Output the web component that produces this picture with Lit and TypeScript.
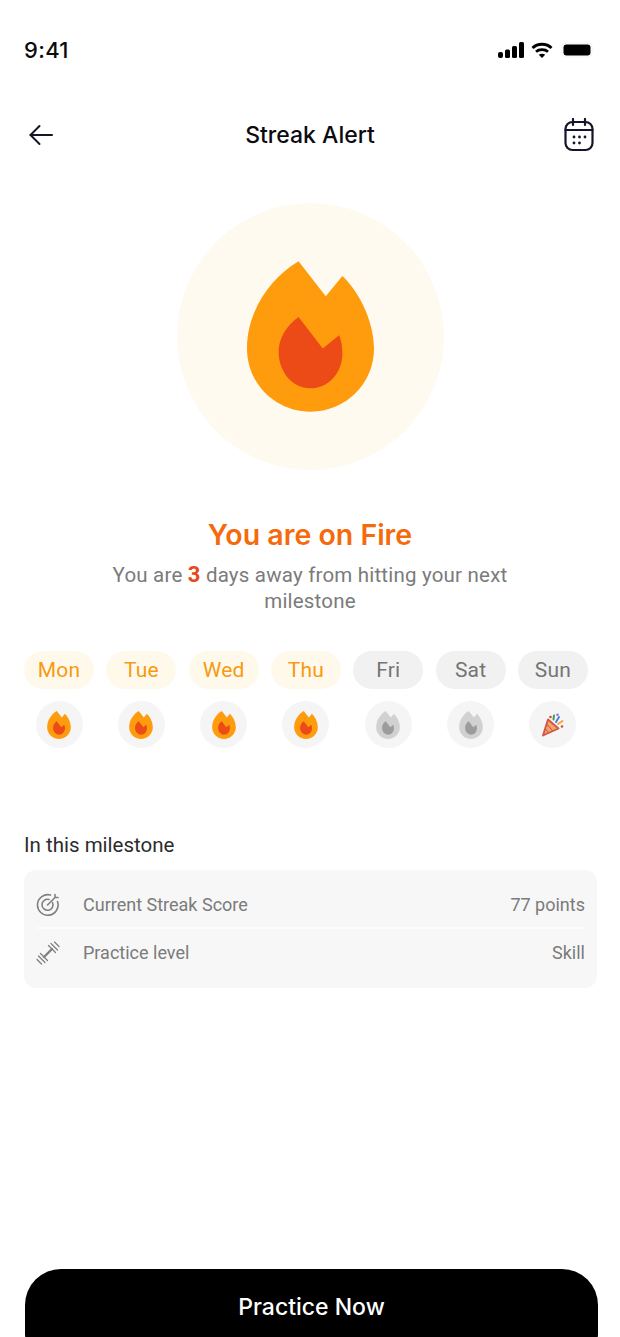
import { LitElement, html, css } from "lit";
import { customElement } from "lit/decorators.js";

const flame = (a: string, b: string) => html`<svg class="flame" viewBox="0 0 382 452" aria-hidden="true">
  <path fill=${a} d="M155 0L237 105L287 44C345 100 382 190 382 262C382 368 297 452 191 452C85 452 0 368 0 262C0 150 70 50 155 0Z"/>
  <path fill=${b} d="M155 167L228 262L277 222C284 238 287 258 287 277C287 335 245 382 190 382C135 382 95 330 95 272C95 230 120 192 155 167Z"/>
</svg>`;

const popper = html`<svg class="popper" viewBox="0 0 24 24" aria-hidden="true">
  <path d="M7 6.500L17.500 15.500L2 22.500Z" fill="#f0a868" stroke="#d2564a" stroke-width="1.900" stroke-linejoin="round"/>
  <path d="M6 11.500L11.500 17.500M4.500 16L7.500 19.500" stroke="#d2564a" stroke-width="1.100" fill="none"/>
  <path d="M12.500 6.500L13 2.500" stroke="#3f9d4a" stroke-width="2" stroke-linecap="round"/>
  <path d="M15 9L18 4" stroke="#4a7fe0" stroke-width="2" stroke-linecap="round"/>
  <path d="M17 11L21.500 8" stroke="#f0a92c" stroke-width="2" stroke-linecap="round"/>
  <circle cx="9.500" cy="4" r="1.300" fill="#e0483c"/>
  <circle cx="16.500" cy="1.800" r="1.200" fill="#a35fd0"/>
  <circle cx="21" cy="13.500" r="1.300" fill="#e0483c"/>
</svg>`;

const days = [
  { d: "Mon", on: true }, { d: "Tue", on: true }, { d: "Wed", on: true }, { d: "Thu", on: true },
  { d: "Fri", on: false }, { d: "Sat", on: false }, { d: "Sun", on: false, party: true },
];

@customElement("app-root")
export class AppRoot extends LitElement {
  static styles = css`
    :host { display: block; width: 620px; height: 1337px; overflow: hidden; background: #fff; font-family: "Inter", "Liberation Sans", sans-serif; color: #0b0b0f; }
    .status { display: flex; justify-content: space-between; align-items: center; height: 24px; padding: 38px 27px 0 24px; }
    .time { font-size: 22px; font-weight: 500; letter-spacing: .3px; }
    .status-icons { display: flex; align-items: center; }
    .wifi { margin: 0 8px 0 7px; }
    .header { display: flex; justify-content: space-between; align-items: center; height: 40px; padding: 0 24px; margin-top: 53px; }
    .header h1 { margin: 0; font-size: 23px; font-weight: 500; }
    .back { margin: 0 3px 0 5px; }
    .cal { margin-right: 2px; }
    .hero { width: 267px; height: 267px; border-radius: 50%; background: #fffaf0; margin: 48px auto 0; display: flex; align-items: center; justify-content: center; }
    .hero .flame { width: 127px; height: 151px; }
    h2 { margin: 47px 0 0; text-align: center; font-size: 28.500px; line-height: 36px; font-weight: 600; color: #f46a0c; }
    .sub { margin: 9px auto 0; width: 440px; text-align: center; font-family: "Roboto", sans-serif; font-size: 20.500px; letter-spacing: .2px; line-height: 26px; color: #7b7b7b; }
    .sub b { color: #e8481a; font-size: 22px; font-weight: 700; }
    .week { display: flex; justify-content: space-between; width: 564px; margin: 37px 0 0 24px; }
    .day { display: flex; flex-direction: column; align-items: center; gap: 12px; width: 70px; }
    .pill { width: 70px; height: 38px; border-radius: 19px; display: flex; align-items: center; justify-content: center; font-family: "Roboto", sans-serif; font-size: 21px; letter-spacing: .2px; background: #f1f1f1; color: #757575; }
    .pill.on { background: #fff9ec; color: #f8990f; }
    .dot { width: 47px; height: 47px; border-radius: 50%; background: #f5f5f5; display: flex; align-items: center; justify-content: center; }
    .dot .flame { width: 24px; height: 28px; }
    .popper { width: 24px; height: 24px; }
    .section { margin: 84px 23px 0 24px; }
    .section h3 { margin: 0; font-family: "Roboto", sans-serif; font-size: 20.500px; line-height: 26px; font-weight: 400; color: #2c2c2c; }
    .card { margin-top: 12px; background: #f7f7f7; border-radius: 12px; padding: 11px 12px 11px; height: 118px; box-sizing: border-box; }
    .row { display: flex; align-items: center; height: 46px; font-family: "Roboto", sans-serif; font-size: 18px; color: #7b7b7b; }
    .row + .row { border-top: 2px solid #fbfbfb; height: 47px; }
    .row svg { width: 24px; height: 24px; margin-right: 23px; flex: none; }
    .row span:last-child { margin-left: auto; }
    .cta { display: flex; align-items: flex-start; justify-content: center; box-sizing: border-box; width: 573px; height: 100px; margin: 281px 0 0 25px; padding-top: 21px; border: 0; border-radius: 36px; background: #000; color: #fff; font-family: "Inter", sans-serif; font-size: 23px; line-height: 34px; font-weight: 500; }
  `;

  render() {
    return html`
      <div class="status">
        <span class="time">9:41</span>
        <div class="status-icons">
          <svg width="26" height="16" viewBox="0 0 26 16"><g fill="#000"><rect x="0" y="10" width="5" height="6" rx="2"/><rect x="7" y="7.500" width="5" height="8.500" rx="1.500"/><rect x="14" y="4" width="5" height="12" rx="1.500"/><rect x="21" y="0" width="5" height="16" rx="1.500"/></g></svg>
          <svg class="wifi" width="22" height="16" viewBox="0 0 22 16" fill="none" stroke="#000" stroke-width="2.800"><path d="M1.500 6C6.500 1 15.500 1 20.500 6"/><path d="M5 9.800C8 7 14 7 17 9.800"/><path d="M11 16L7.800 12.800C9.500 11.400 12.500 11.400 14.200 12.800Z" fill="#000" stroke="none"/></svg>
          <svg width="32" height="16" viewBox="0 0 32 16"><rect x="1" y="1" width="30" height="14" rx="4" fill="#fff" stroke="#f2f2f2"/><rect x="2.500" y="2.500" width="27" height="11" rx="3" fill="#000"/></svg>
        </div>
      </div>
      <div class="header">
        <svg class="back" width="24" height="24" viewBox="0 0 24 24" fill="none" stroke="#14142b" stroke-width="2" stroke-linecap="round" stroke-linejoin="round"><path d="M23 12H1.500"/><path d="M10.500 3L1.500 12l9 9"/></svg>
        <h1>Streak Alert</h1>
        <svg class="cal" width="30" height="34" viewBox="0 0 30 34" fill="none" stroke="#14142b" stroke-width="2.200" stroke-linecap="round"><rect x="1.500" y="4" width="27" height="28" rx="7"/><path d="M1.500 12H28.500M9 1v6M21 1v6"/><g fill="#14142b" stroke="none"><circle cx="10" cy="19" r="1.400"/><circle cx="15.500" cy="19" r="1.400"/><circle cx="21" cy="19" r="1.400"/><circle cx="10" cy="25" r="1.400"/><circle cx="15.500" cy="25" r="1.400"/></g></svg>
      </div>
      <div class="hero">${flame("#fe9c0e", "#ec4a17")}</div>
      <h2>You are on Fire</h2>
      <p class="sub">You are <b>3</b> days away from hitting your next milestone</p>
      <div class="week">
        ${days.map((x) => html`<div class="day">
          <div class="pill ${x.on ? "on" : ""}">${x.d}</div>
          <div class="dot">${x.party ? popper : x.on ? flame("#fe9c0e", "#ec4a17") : flame("#d1d1d1", "#9c9c9c")}</div>
        </div>`)}
      </div>
      <div class="section">
        <h3>In this milestone</h3>
        <div class="card">
          <div class="row">
            <svg viewBox="0 0 24 24" fill="none" stroke="#808080" stroke-width="1.600" stroke-linecap="round" stroke-linejoin="round"><path d="M21.500 9.500A10.300 10.300 0 1 1 14.500 3"/><path d="M16.500 10.500A5.500 5.500 0 1 1 13 7.500"/><path d="M11.500 13L19 5.500M19 2.500V5.500H22"/></svg>
            <span>Current Streak Score</span><span>77 points</span>
          </div>
          <div class="row">
            <svg viewBox="0 0 24 24" fill="none" stroke="#808080" stroke-width="1.300" stroke-linecap="round" stroke-linejoin="round"><path d="M8 16L16 8" stroke-width="2.400"/><path d="M12.500 4.500L19.500 11.500M15 2.500L21.500 9M18.500 1L23 5.500"/><path d="M4.500 12.500L11.500 19.500M2.500 15L9 21.500M1 18.500L5.500 23"/></svg>
            <span>Practice level</span><span>Skill</span>
          </div>
        </div>
      </div>
      <button class="cta">Practice Now</button>
    `;
  }
}
